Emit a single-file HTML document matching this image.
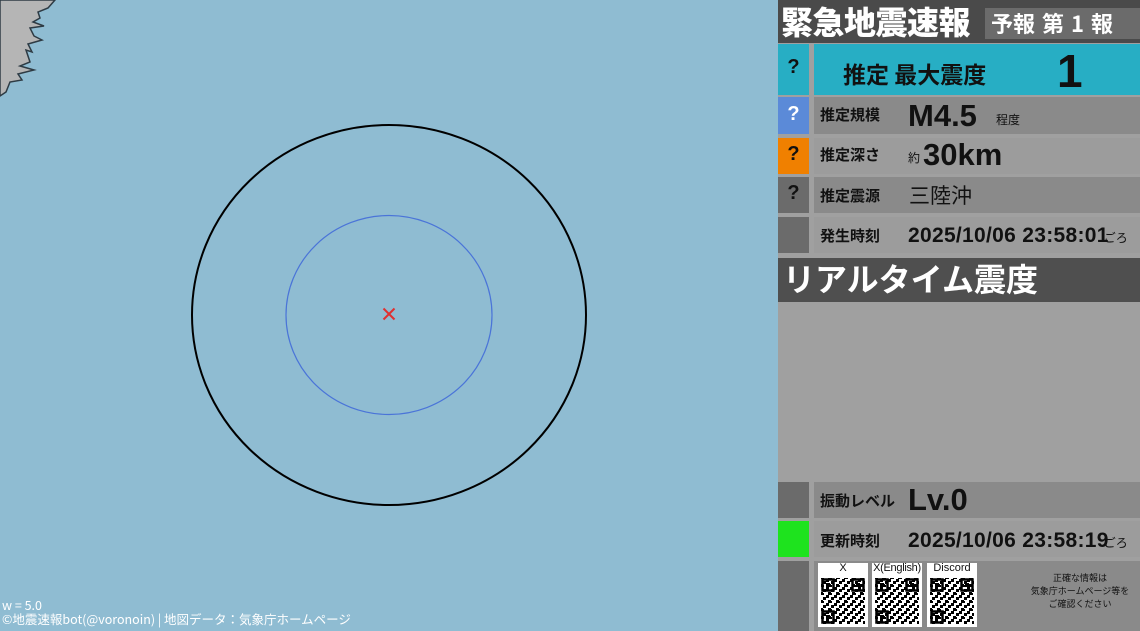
<!DOCTYPE html>
<html><head><meta charset="utf-8"><style>
*{margin:0;padding:0;box-sizing:border-box}
body{width:1140px;height:631px;overflow:hidden;background:#8fbcd2;position:relative;font-family:"Liberation Sans","Noto Sans CJK JP",sans-serif}
.a{position:absolute}
.jp{font-family:"Noto Sans CJK JP","Liberation Sans",sans-serif}
.q{position:absolute;left:778px;width:31px;color:#111;font-weight:bold;font-size:20px;text-align:center}
.m{position:absolute;left:814px;width:326px}
.lab{position:absolute;font-weight:bold;font-size:15px;color:#111}
</style></head><body>
<svg class="a" style="left:0;top:0" width="778" height="631">
<path d="M0 0 L55 0 L48 8 L38 12 L40 18 L33 22 L44 26 L30 28 L34 36 L42 40 L28 44 L32 52 L26 50 L30 62 L20 66 L34 70 L18 74 L22 80 L10 82 L6 92 L0 96 Z" fill="#b5b5b5" stroke="#2e3b44" stroke-width="1.5"/>
<ellipse cx="389" cy="315" rx="197" ry="190" fill="none" stroke="#000" stroke-width="2"/>
<ellipse cx="389" cy="315" rx="103" ry="99.5" fill="none" stroke="#4a74d8" stroke-width="1.2"/>
<path d="M383.5 308.5 L394.5 319.5 M394.5 308.5 L383.5 319.5" stroke="#e03030" stroke-width="2"/>
</svg>
<div class="a jp" style="left:2px;top:598px;font-size:12.5px;color:#fff;line-height:14px;white-space:nowrap">w = 5.0<br>©地震速報bot(@voronoin) | 地図データ：気象庁ホームページ</div>

<div class="a" style="left:778px;top:0;width:362px;height:631px;background:#a0a0a0"></div>
<div class="a" style="left:778px;top:0;width:362px;height:43px;background:#4a4a4a"></div>
<div class="a jp" style="left:781px;top:0;font-size:32px;font-weight:900;color:#fff;line-height:42px;letter-spacing:-0.5px">緊急地震速報</div>
<div class="a jp" style="left:985px;top:8px;width:155px;height:31px;background:#6b6b6b;color:#fff;font-weight:bold;font-size:22px;line-height:31px;padding-left:6px;white-space:nowrap;word-spacing:2px">予報 第 1 報</div>

<div class="a" style="left:778px;top:44px;width:31px;height:51px;background:#27aec4"></div>
<div class="m" style="top:44px;height:51px;background:#27aec4"></div>
<div class="q" style="top:56px">?</div>
<div class="a jp" style="left:843px;top:56px;font-size:23px;font-weight:bold;color:#111;line-height:34px">推定 最大震度</div>
<div class="a" style="left:1057px;top:46px;font-size:46px;font-weight:bold;color:#111;line-height:50px">1</div>

<div class="a" style="left:778px;top:97px;width:31px;height:37px;background:#5b8ad8"></div>
<div class="m" style="top:97px;height:37px;background:#8a8a8a"></div>
<div class="q" style="top:103px;color:#fff">?</div>
<div class="lab jp" style="left:820px;top:104px">推定規模</div>
<div class="a" style="left:908px;top:96px;font-size:31px;font-weight:bold;color:#111;line-height:40px">M4.5</div>
<div class="a jp" style="left:996px;top:111px;font-size:12px;color:#111">程度</div>

<div class="a" style="left:778px;top:138px;width:31px;height:36px;background:#f08000"></div>
<div class="m" style="top:138px;height:36px;background:#9c9c9c"></div>
<div class="q" style="top:143px">?</div>
<div class="lab jp" style="left:820px;top:144px">推定深さ</div>
<div class="a jp" style="left:908px;top:149px;font-size:12px;color:#111">約</div>
<div class="a" style="left:923px;top:136px;font-size:31px;font-weight:bold;color:#111;line-height:38px">30km</div>

<div class="a" style="left:778px;top:177px;width:31px;height:36px;background:#6b6b6b"></div>
<div class="m" style="top:177px;height:36px;background:#8a8a8a"></div>
<div class="q" style="top:182px">?</div>
<div class="lab jp" style="left:820px;top:185px">推定震源</div>
<div class="a jp" style="left:909px;top:180px;font-size:21px;color:#111;line-height:30px">三陸沖</div>

<div class="a" style="left:778px;top:217px;width:31px;height:36px;background:#6b6b6b"></div>
<div class="m" style="top:217px;height:36px;background:#9c9c9c"></div>
<div class="lab jp" style="left:820px;top:225px">発生時刻</div>
<div class="a" style="left:908px;top:224px;font-size:21px;font-weight:bold;color:#111;white-space:nowrap;letter-spacing:0.3px">2025/10/06 23:58:01<span class="jp" style="font-size:12px;font-weight:normal;margin-left:-5px;letter-spacing:0">ごろ</span></div>

<div class="a" style="left:778px;top:258px;width:362px;height:44px;background:#4f4f4f"></div>
<div class="a jp" style="left:783px;top:257px;font-size:32px;font-weight:bold;color:#fff;line-height:42px">リアルタイム震度</div>

<div class="a" style="left:778px;top:482px;width:31px;height:36px;background:#6b6b6b"></div>
<div class="m" style="top:482px;height:36px;background:#8a8a8a"></div>
<div class="lab jp" style="left:820px;top:490px">振動レベル</div>
<div class="a" style="left:908px;top:480px;font-size:31px;font-weight:bold;color:#111;line-height:40px">Lv.0</div>

<div class="a" style="left:778px;top:521px;width:31px;height:36px;background:#1ee31e"></div>
<div class="m" style="top:521px;height:36px;background:#9c9c9c"></div>
<div class="lab jp" style="left:820px;top:530px">更新時刻</div>
<div class="a" style="left:908px;top:529px;font-size:21px;font-weight:bold;color:#111;white-space:nowrap;letter-spacing:0.3px">2025/10/06 23:58:19<span class="jp" style="font-size:12px;font-weight:normal;margin-left:-5px;letter-spacing:0">ごろ</span></div>

<div class="a" style="left:778px;top:561px;width:31px;height:70px;background:#6b6b6b"></div>
<div class="m" style="top:561px;height:70px;background:#8a8a8a"></div>
<svg class="a" style="left:818px;top:563px" width="160" height="64">
<defs>
<pattern id="n" width="8" height="8" patternUnits="userSpaceOnUse">
<rect width="8" height="8" fill="#fff"/><rect x="0" y="0" width="3" height="3" fill="#000"/><rect x="5" y="2" width="3" height="3" fill="#000"/><rect x="2" y="5" width="3" height="3" fill="#000"/><rect x="4" y="6" width="2" height="2" fill="#000"/>
</pattern>
<g id="qr"><rect width="50" height="64" fill="#fff"/>
<rect x="3" y="15" width="44" height="46" fill="url(#n)"/>
<g fill="none" stroke="#000" stroke-width="2.5"><rect x="4.5" y="16.5" width="11" height="11"/><rect x="34.5" y="16.5" width="11" height="11"/><rect x="4.5" y="48.5" width="11" height="11"/></g>
<rect x="8" y="20" width="4" height="4"/><rect x="38" y="20" width="4" height="4"/><rect x="8" y="52" width="4" height="4"/>
</g></defs>
<use href="#qr" x="0"/><use href="#qr" x="54"/><use href="#qr" x="109"/>
</svg>
<div class="a" style="left:818px;top:562px;width:50px;text-align:center;font-size:11px;color:#111">X</div>
<div class="a" style="left:870px;top:562px;width:54px;text-align:center;font-size:11px;color:#111;letter-spacing:-0.3px">X(English)</div>
<div class="a" style="left:927px;top:562px;width:50px;text-align:center;font-size:11px;color:#111">Discord</div>
<div class="a jp" style="left:1025px;top:571px;width:110px;text-align:center;font-size:9px;line-height:13px;color:#111">正確な情報は<br>気象庁ホームページ等を<br>ご確認ください</div>
</body></html>
